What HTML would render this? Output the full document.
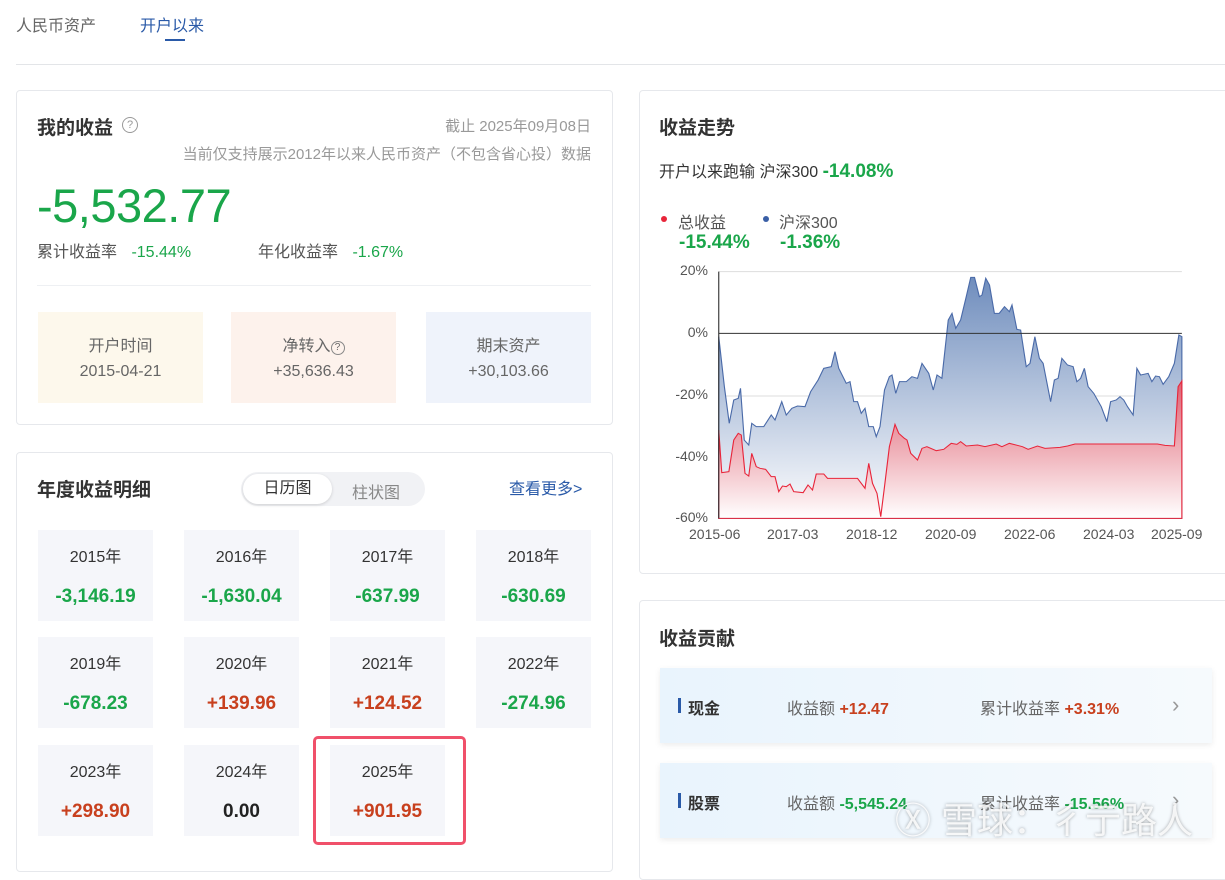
<!DOCTYPE html>
<html><head><meta charset="utf-8"><style>
*{margin:0;padding:0;box-sizing:border-box}
body{width:1225px;height:855px;overflow:hidden;background:#fff;font-family:"Liberation Sans","Noto Sans CJK SC",sans-serif;color:#333;position:relative}
.a{position:absolute;white-space:nowrap}
.card{position:absolute;border:1px solid #e6e8ec;border-radius:4px;background:#fff}
.g{color:#1aa64a}.r{color:#c8401e}
.h{font-size:19px;font-weight:bold;color:#333}
.box{position:absolute;top:312px;width:165px;height:91px;text-align:center;font-size:16px;color:#666;padding-top:22px;line-height:25px}
.yc{position:absolute;width:115px;height:91px;background:#f5f6fa;text-align:center}
.yc .y{font-size:16px;color:#333;margin-top:13px}
.yc .v{font-size:19px;font-weight:bold;margin-top:19px}
.row{position:absolute;left:660px;width:552px;height:75px;background:linear-gradient(90deg,#e9f4fd,#f6fafd);box-shadow:0 2px 6px rgba(0,0,0,.08);font-size:16px;color:#666}
.row span{position:absolute;top:27px}
.ax{position:absolute;font-size:14px;color:#555;white-space:nowrap}
</style></head><body>
<div class="a" style="left:16px;top:12px;font-size:16px;color:#666">人民币资产</div>
<div class="a" style="left:140px;top:12px;font-size:16px;color:#2a5aa8">开户以来</div>
<div class="a" style="left:165px;top:39px;width:20px;height:2px;background:#2a5aa8"></div>
<div class="a" style="left:16px;top:64px;width:1209px;height:1px;background:#e3e5e8"></div>

<div class="card" style="left:16px;top:90px;width:597px;height:335px"></div>
<div class="a h" style="left:37px;top:113px">我的收益</div>
<div class="a" style="left:122px;top:117px;width:16px;height:16px;border:1px solid #999;border-radius:50%;font-size:11px;color:#999;text-align:center;line-height:14px">?</div>
<div class="a" style="right:634px;top:115px;font-size:15px;color:#999">截止 2025年09月08日</div>
<div class="a" style="right:634px;top:143px;font-size:15px;color:#999">当前仅支持展示2012年以来人民币资产（不包含省心投）数据</div>
<div class="a g" style="left:37px;top:180px;font-size:47px;line-height:52px;letter-spacing:-0.5px">-5,532.77</div>
<div class="a" style="left:37px;top:238px;font-size:16px;color:#555">累计收益率 <span class="g" style="margin-left:10px">-15.44%</span></div>
<div class="a" style="left:258px;top:238px;font-size:16px;color:#555">年化收益率 <span class="g" style="margin-left:10px">-1.67%</span></div>
<div class="a" style="left:37px;top:285px;width:554px;height:1px;background:#eef0f3"></div>
<div class="box" style="left:38px;background:#fdf8ec">开户时间<br>2015-04-21</div>
<div class="box" style="left:231px;background:#fdf2ec">净转入<span style="display:inline-block;width:14px;height:14px;border:1px solid #888;border-radius:50%;font-size:10px;line-height:12px;vertical-align:1px">?</span><br>+35,636.43</div>
<div class="box" style="left:426px;background:#eff3fb">期末资产<br>+30,103.66</div>

<div class="card" style="left:16px;top:452px;width:597px;height:420px"></div>
<div class="a h" style="left:37px;top:475px">年度收益明细</div>
<div class="a" style="left:241px;top:472px;width:184px;height:34px;background:#f1f2f5;border-radius:17px"></div>
<div class="a" style="left:243px;top:474px;width:89px;height:30px;background:#fff;border-radius:15px;box-shadow:0 1px 3px rgba(0,0,0,.15);text-align:center;line-height:30px;font-size:16px;color:#333">日历图</div>
<div class="a" style="left:352px;top:479px;font-size:16px;color:#888">柱状图</div>
<div class="a" style="left:509px;top:475px;font-size:16px;color:#2a5aa8">查看更多&gt;</div>

<div class="yc" style="left:38px;top:530px"><div class="y">2015年</div><div class="v g">-3,146.19</div></div>
<div class="yc" style="left:184px;top:530px"><div class="y">2016年</div><div class="v g">-1,630.04</div></div>
<div class="yc" style="left:330px;top:530px"><div class="y">2017年</div><div class="v g">-637.99</div></div>
<div class="yc" style="left:476px;top:530px"><div class="y">2018年</div><div class="v g">-630.69</div></div>
<div class="yc" style="left:38px;top:637px"><div class="y">2019年</div><div class="v g">-678.23</div></div>
<div class="yc" style="left:184px;top:637px"><div class="y">2020年</div><div class="v r">+139.96</div></div>
<div class="yc" style="left:330px;top:637px"><div class="y">2021年</div><div class="v r">+124.52</div></div>
<div class="yc" style="left:476px;top:637px"><div class="y">2022年</div><div class="v g">-274.96</div></div>
<div class="yc" style="left:38px;top:745px"><div class="y">2023年</div><div class="v r">+298.90</div></div>
<div class="yc" style="left:184px;top:745px"><div class="y">2024年</div><div class="v" style="color:#222">0.00</div></div>
<div class="yc" style="left:330px;top:745px"><div class="y">2025年</div><div class="v r">+901.95</div></div>
<div class="a" style="left:313px;top:736px;width:153px;height:109px;border:3px solid #f0506a;border-radius:5px"></div>

<div class="card" style="left:639px;top:90px;width:600px;height:484px"></div>
<div class="a h" style="left:659px;top:113px">收益走势</div>
<div class="a" style="left:659px;top:158px;font-size:16px;color:#333">开户以来跑输 沪深300 <b class="g" style="font-size:19px">-14.08%</b></div>
<div class="a" style="left:661px;top:216px;width:6px;height:6px;border-radius:50%;background:#e8253a"></div>
<div class="a" style="left:678px;top:209px;font-size:16px;color:#555">总收益</div>
<div class="a" style="left:763px;top:216px;width:6px;height:6px;border-radius:50%;background:#3a5fa6"></div>
<div class="a" style="left:779px;top:209px;font-size:16px;color:#555">沪深300</div>
<div class="a g" style="left:679px;top:232px;font-size:19px;font-weight:bold">-15.44%</div>
<div class="a g" style="left:780px;top:232px;font-size:19px;font-weight:bold">-1.36%</div>
<div class="ax" style="right:517px;top:262px">20%</div>
<div class="ax" style="right:517px;top:324px">0%</div>
<div class="ax" style="right:517px;top:386px">-20%</div>
<div class="ax" style="right:517px;top:448px">-40%</div>
<div class="ax" style="right:517px;top:509px">-60%</div>
<div class="ax" style="left:689px;top:526px">2015-06</div>
<div class="ax" style="left:767px;top:526px">2017-03</div>
<div class="ax" style="left:846px;top:526px">2018-12</div>
<div class="ax" style="left:925px;top:526px">2020-09</div>
<div class="ax" style="left:1004px;top:526px">2022-06</div>
<div class="ax" style="left:1083px;top:526px">2024-03</div>
<div class="ax" style="left:1151px;top:526px">2025-09</div>
<svg class="a" style="left:640px;top:200px" width="585" height="360" viewBox="0 0 1560 1080" preserveAspectRatio="none">
<defs>
<linearGradient id="bg" x1="0" y1="0" x2="0" y2="1"><stop offset="0" stop-color="#6f8dbd"/><stop offset="1" stop-color="#ffffff"/></linearGradient>
<linearGradient id="rg" x1="0" y1="0" x2="0" y2="1"><stop offset="0" stop-color="#e65060" stop-opacity=".85"/><stop offset="1" stop-color="#ffffff" stop-opacity=".9"/></linearGradient>
</defs>
<g stroke="#ddd" stroke-width="3"><line x1="210" y1="215" x2="1445" y2="215"/><line x1="210" y1="588" x2="1445" y2="588"/><line x1="210" y1="770" x2="1445" y2="770"/><line x1="210" y1="955" x2="1445" y2="955"/></g>
<path fill="url(#bg)" stroke="#4a6aa8" stroke-width="3" d="M210,955 L210,410 225,560 238,670 250,600 262,595 268,565 278,720 290,735 298,670 310,680 330,680 350,645 360,660 378,605 390,645 405,625 420,618 440,620 455,575 475,540 490,505 510,500 520,455 530,505 550,550 560,545 570,605 580,605 590,640 600,625 610,680 622,680 630,710 640,680 652,570 665,530 672,525 682,580 692,545 710,545 725,530 740,535 752,490 770,520 782,570 792,525 805,535 822,360 832,340 842,385 855,360 870,290 882,232 892,232 905,290 912,285 922,235 932,255 945,340 958,340 972,320 985,335 992,315 1005,388 1015,390 1030,500 1040,490 1053,410 1065,475 1075,490 1095,605 1105,540 1115,535 1125,475 1140,495 1155,500 1165,545 1175,535 1185,505 1195,560 1210,580 1230,620 1245,665 1255,605 1270,600 1280,590 1290,600 1300,620 1315,645 1325,505 1335,525 1355,520 1365,545 1375,528 1385,530 1395,553 1410,530 1425,490 1437,405 1445,410 L1445,955 Z"/>
<path fill="url(#rg)" stroke="#e8253a" stroke-width="3" d="M210,955 L210,690 218,818 237,815 250,720 262,700 270,705 280,820 290,828 298,760 310,800 320,805 335,808 350,830 360,830 370,875 380,858 390,860 400,852 410,875 435,878 448,855 460,870 470,822 490,822 500,835 580,835 600,865 610,790 620,850 632,880 642,950 652,860 665,740 680,673 690,700 705,715 712,720 722,760 740,780 752,745 765,740 790,752 810,748 830,730 845,733 855,725 870,738 900,735 920,740 950,732 965,740 985,730 1020,740 1035,748 1060,738 1080,745 1120,742 1140,738 1160,732 1380,732 1400,736 1425,738 1435,560 1445,543 L1445,955 Z"/>
<line x1="210" y1="400" x2="1445" y2="400" stroke="#333" stroke-width="3"/>
<line x1="210" y1="215" x2="210" y2="955" stroke="#333" stroke-width="3"/>
</svg>

<div class="card" style="left:639px;top:600px;width:600px;height:280px"></div>
<div class="a h" style="left:659px;top:624px">收益贡献</div>
<div class="row" style="top:668px">
<div class="a" style="left:18px;top:30px;width:3px;height:15px;background:#2a5aa8"></div>
<span style="left:28px;color:#333;font-weight:bold">现金</span>
<span style="left:127px">收益额 <b class="r">+12.47</b></span>
<span style="left:320px">累计收益率 <b class="r">+3.31%</b></span>
<span style="left:512px;top:24px;color:#999;font-size:22px">›</span></div>
<div class="row" style="top:763px">
<div class="a" style="left:18px;top:30px;width:3px;height:15px;background:#2a5aa8"></div>
<span style="left:28px;color:#333;font-weight:bold">股票</span>
<span style="left:127px">收益额 <b class="g">-5,545.24</b></span>
<span style="left:320px">累计收益率 <b class="g">-15.56%</b></span>
<span style="left:512px;top:24px;color:#999;font-size:22px">›</span></div>
<div class="a" style="left:895px;top:792px;font-size:36px;color:rgba(255,255,255,.85);text-shadow:0 0 3px rgba(0,0,0,.35)">Ⓧ 雪球：彳亍路人</div>
</body></html>
